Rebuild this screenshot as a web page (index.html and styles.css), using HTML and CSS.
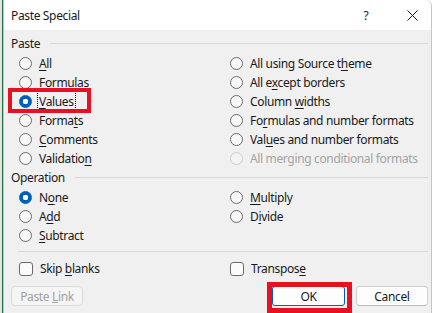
FILE: index.html
```html
<!DOCTYPE html>
<html lang="en">
<head>
  <meta charset="UTF-8" />
  <title>Paste Special</title>
  <link rel="stylesheet" href="styles.css">
</head>
<body>
  <div class="screen">
    <div class="sheet-edge"></div>

    <div class="dialog">
      <div class="titlebar">
        <span class="title">Paste Special</span>
        <span class="help">?</span>
        <svg class="close" width="11" height="11" viewBox="0 0 11 11">
          <path d="M0.5 0.5 L10.5 10.5 M10.5 0.5 L0.5 10.5" stroke="#1a1a1a" stroke-width="1" fill="none"/>
        </svg>
      </div>

      <div class="body">
        <div class="legend"><span>Paste</span><i></i></div>
        <div class="options paste-options">
          <label class="opt"><span class="radio"></span><span><u>A</u>ll</span></label>
          <label class="opt"><span class="radio"></span><span>Formulas</span></label>
          <label class="opt"><span class="radio checked"></span><span class="focus"><u>V</u>alues</span></label>
          <label class="opt"><span class="radio"></span><span>Forma<u>t</u>s</span></label>
          <label class="opt"><span class="radio"></span><span><u>C</u>omments</span></label>
          <label class="opt"><span class="radio"></span><span>Validatio<u>n</u></span></label>
          <label class="opt"><span class="radio"></span><span>All using Source t<u>h</u>eme</span></label>
          <label class="opt"><span class="radio"></span><span>All e<u>x</u>cept borders</span></label>
          <label class="opt"><span class="radio"></span><span>Column <u>w</u>idths</span></label>
          <label class="opt"><span class="radio"></span><span>Fo<u>r</u>mulas and number formats</span></label>
          <label class="opt"><span class="radio"></span><span>Val<u>u</u>es and number formats</span></label>
          <label class="opt disabled"><span class="radio"></span><span>All merging conditional formats</span></label>
        </div>

        <div class="legend op-legend"><span>Operation</span><i></i></div>
        <div class="options op-options">
          <label class="opt"><span class="radio checked"></span><span>N<u>o</u>ne</span></label>
          <label class="opt"><span class="radio"></span><span>A<u>d</u>d</span></label>
          <label class="opt"><span class="radio"></span><span><u>S</u>ubtract</span></label>
          <label class="opt"><span class="radio"></span><span><u>M</u>ultiply</span></label>
          <label class="opt"><span class="radio"></span><span>D<u>i</u>vide</span></label>
        </div>

        <div class="divider"></div>

        <div class="options checks">
          <label class="opt"><span class="check"></span><span>Skip <u>b</u>lanks</span></label>
          <label class="opt"><span class="check"></span><span>Transpos<u>e</u></span></label>
        </div>

        <div class="buttons">
          <button class="btn" disabled>Paste <u>L</u>ink</button>
          <span class="spacer"></span>
          <button class="btn default">OK</button>
          <button class="btn">Cancel</button>
        </div>
      </div>
    </div>

    <!-- red annotation boxes -->
    <div class="mark mark-values"></div>
    <div class="mark mark-ok"></div>
  </div>
</body>
</html>
```

FILE: styles.css
```css
:root {
  --face: #f0f0f0;
  --text: #1a1a1a;
  --line: #d8d8d8;
  --accent: #005fb8;
  --mark: #e81123;
}

body {
  margin: 0;
  background: #fff;
  font-family: "Noto Sans", "Open Sans", sans-serif;
  font-size: 12px;
  letter-spacing: -0.35px;
  color: var(--text);
}

.screen {
  position: relative;
  display: flex;
  width: 436px;
  height: 313px;
  overflow: hidden;
}

.sheet-edge {
  width: 3px;
  background: linear-gradient(to right, #e3e3e3 0 2px, #217346 2px 3px);
}

.dialog {
  width: 427px;
  border-left: 1px solid #c4c4c4;
  border-right: 1px solid #c4c4c4;
  border-top-right-radius: 6px;
  background: var(--face);
  display: flex;
  flex-direction: column;
}

.titlebar {
  height: 30px;
  background: #fff;
  display: flex;
  align-items: center;
  padding-left: 7px;
  border-top-right-radius: 6px;
}

.title {
  flex: 1;
}

.help {
  width: 10px;
  text-align: center;
  margin-right: 36px;
}

.close {
  margin-right: 13px;
}

.body {
  padding: 0 3px 0 7px;
}

.legend {
  display: flex;
  align-items: center;
  height: 16px;
  margin-top: 5px;
}

.legend i {
  flex: 1;
  height: 1px;
  background: var(--line);
  margin-left: 10px;
}

.op-legend {
  margin-top: 1px;
}

.options {
  display: grid;
  grid-template-columns: 211px 1fr;
  grid-auto-rows: 19px;
  grid-auto-flow: column;
  padding-left: 8px;
  margin-top: 3px;
}

.paste-options {
  grid-template-rows: repeat(6, 19px);
}

.op-options {
  grid-template-rows: repeat(3, 19px);
}

.checks {
  margin-top: 7px;
}

.opt {
  display: flex;
  align-items: center;
  gap: 7px;
  white-space: nowrap;
}

.opt u {
  text-underline-offset: 2px;
}

.radio {
  width: 11px;
  height: 11px;
  border-radius: 50%;
  border: 1px solid #6b6b6b;
  background: #f8f8f8;
  box-sizing: content-box;
  flex: none;
}

.radio.checked {
  border-color: var(--accent);
  background: radial-gradient(circle, #fff 0 2.6px, var(--accent) 3px);
}

.disabled {
  color: #a3a3a3;
}

.disabled .radio {
  border-color: #cdcdcd;
  background: #f4f4f4;
}

.check {
  width: 12px;
  height: 12px;
  border: 1px solid #6b6b6b;
  border-radius: 3px;
  background: #fbfbfb;
  flex: none;
}

.focus {
  outline: 1px dotted #000;
  outline-offset: 1px;
}

.divider {
  height: 1px;
  background: var(--line);
  margin: 6px 0 0 7px;
  width: 410px;
}

.buttons {
  display: flex;
  align-items: center;
  gap: 11px;
  margin-top: 8px;
}

.spacer {
  flex: 1;
}

.btn {
  width: 72px;
  height: 20px;
  padding: 0;
  font: inherit;
  letter-spacing: inherit;
  color: var(--text);
  background: #fdfdfd;
  border: 1px solid #d0d0d0;
  border-bottom-color: #bdbdbd;
  border-radius: 4px;
}

.btn:disabled {
  color: #a0a0a0;
  background: #f5f5f5;
  border-color: #dadada;
}

.btn.default {
  width: 73px;
  border: 1px solid var(--accent);
  border-radius: 3px;
}

.mark {
  position: absolute;
  border: 4px solid var(--mark);
  box-sizing: border-box;
}

.mark-values {
  left: 8px;
  top: 88px;
  width: 83px;
  height: 25px;
}

.mark-ok {
  left: 267px;
  top: 282px;
  width: 85px;
  height: 31px;
  border-width: 5px;
}
```
